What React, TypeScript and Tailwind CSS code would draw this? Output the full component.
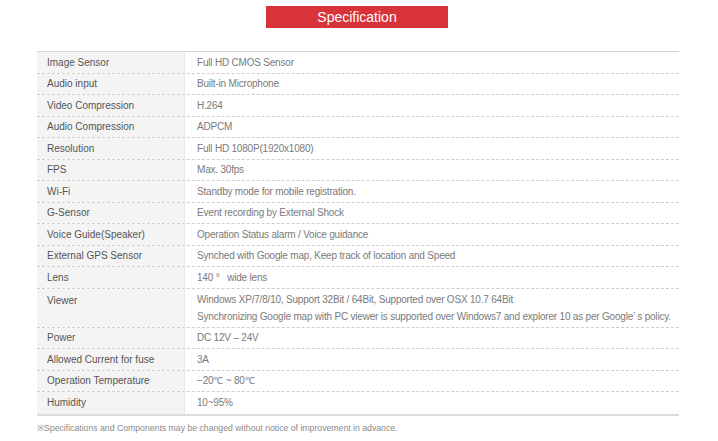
const specs: { label: string; value: string[] }[] = [
  { label: "Image Sensor", value: ["Full HD CMOS Sensor"] },
  { label: "Audio input", value: ["Built-in Microphone"] },
  { label: "Video Compression", value: ["H.264"] },
  { label: "Audio Compression", value: ["ADPCM"] },
  { label: "Resolution", value: ["Full HD 1080P(1920x1080)"] },
  { label: "FPS", value: ["Max. 30fps"] },
  { label: "Wi-Fi", value: ["Standby mode for mobile registration."] },
  { label: "G-Sensor", value: ["Event recording by External Shock"] },
  { label: "Voice Guide(Speaker)", value: ["Operation Status alarm / Voice guidance"] },
  { label: "External GPS Sensor", value: ["Synched with Google map, Keep track of location and Speed"] },
  { label: "Lens", value: ["140 °\u00a0\u00a0 wide lens"] },
  {
    label: "Viewer",
    value: [
      "Windows XP/7/8/10, Support 32Bit / 64Bit, Supported over OSX 10.7 64Bit",
      "Synchronizing Google map with PC viewer is supported over Windows7 and explorer 10 as per Google’ s policy.",
    ],
  },
  { label: "Power", value: ["DC 12V – 24V"] },
  { label: "Allowed Current for fuse", value: ["3A"] },
  { label: "Operation Temperature", value: ["−20℃ ~ 80℃"] },
  { label: "Humidity", value: ["10~95%"] },
];

export default function App() {
  return (
    <div className="w-[718px] h-[441px] bg-white overflow-hidden font-['Liberation_Sans',Arial,sans-serif]">
      <div className="pt-[6px] flex justify-center">
        <div className="w-[182px] h-[22px] ml-[-4px] bg-[#d8323b] text-white text-[14px] flex items-center justify-center">
          Specification
        </div>
      </div>

      <div className="mt-[23px] mx-[37px] w-[642px] border-t border-[#d4d4d4] border-b-2 border-b-[#dcdcdc]">
        {specs.map((s, i) => {
          const multi = s.value.length > 1;
          return (
            <div
              key={s.label}
              className={`flex text-[10px] leading-[11px] box-border ${multi ? "h-[39px]" : "h-[21.5px]"} ${
                i < specs.length - 1 ? "border-b border-dashed border-[#cfcfcf]" : ""
              }`}
            >
              <div
                className={`w-[148px] shrink-0 bg-[#f4f4f4] border-r border-[#e8e8e8] pl-[10px] text-[#555] flex ${
                  multi ? "items-start pt-[6px]" : "items-center"
                }`}
              >
                {s.label}
              </div>
              <div className="flex-1 pl-[12px] text-[#7a7a7a] tracking-[-0.2px] whitespace-nowrap flex flex-col justify-center">
                {s.value.map((v) => (
                  <div key={v} className={multi ? "leading-[17px]" : ""}>
                    {v}
                  </div>
                ))}
              </div>
            </div>
          );
        })}
      </div>

      <div className="mx-[37px] mt-[6px] text-[8.7px] text-[#8a8a8a]">
        ※Specifications and Components may be changed without notice of improvement in advance.
      </div>
    </div>
  );
}
